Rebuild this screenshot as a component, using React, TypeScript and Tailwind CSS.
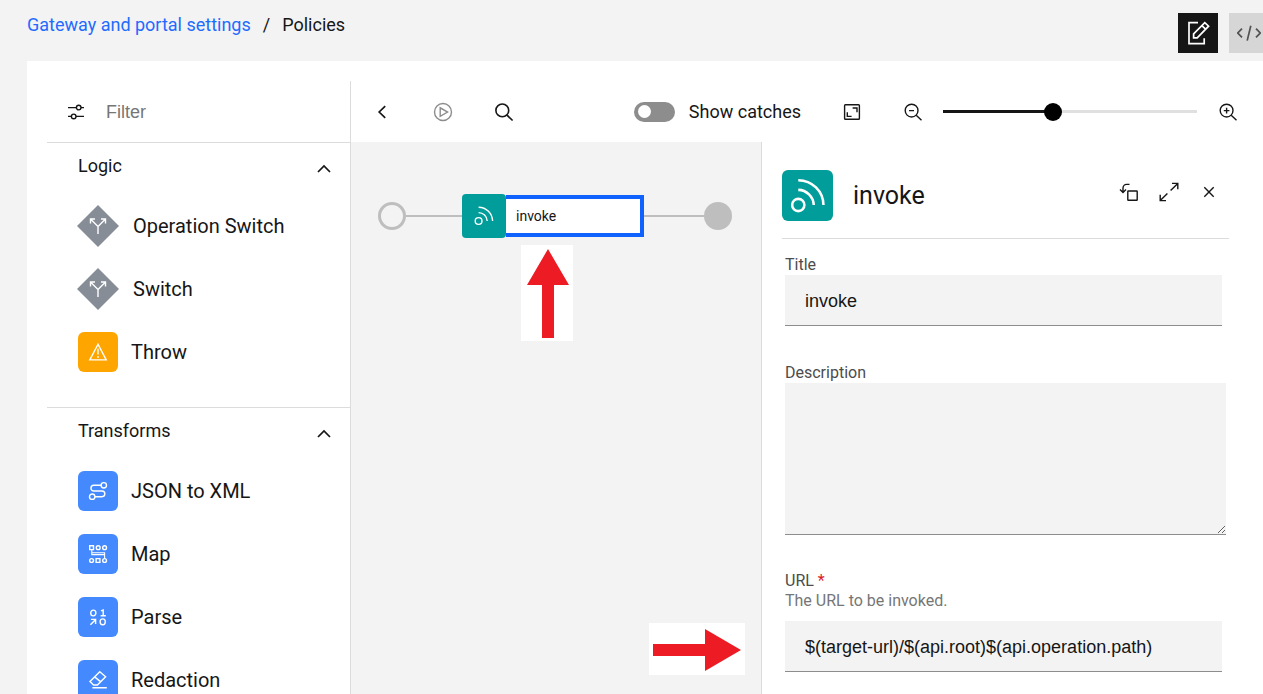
import { useState } from "react";
import type { ReactNode } from "react";

type Policy = {
  name: string;
  icon: ReactNode;
  shape?: "diamond" | "square";
  color: string;
};

const switchIcon = (
  <Icon>
    <path d="M0 8V0.5L-7 -6.5M0 0.5L7 -6.5M-7.5 -2.5V-7H-3M7.5 -2.5V-7H3" />
  </Icon>
);

const logicPolicies: Policy[] = [
  { name: "Operation Switch", icon: switchIcon, shape: "diamond", color: "text-[#878d96]" },
  { name: "Switch", icon: switchIcon, shape: "diamond", color: "text-[#878d96]" },
  {
    name: "Throw",
    color: "bg-[#ffa500]",
    icon: (
      <Icon>
        <path d="M0 -7.8L-8.2 7.9H8.2ZM0 -3.2V2.6" />
        <circle cx="0" cy="5" r="0.9" fill="currentColor" stroke="none" />
      </Icon>
    ),
  },
];

const transformPolicies: Policy[] = [
  {
    name: "JSON to XML",
    color: "bg-[#4589ff]",
    icon: (
      <Icon>
        <circle cx="5.8" cy="-5.7" r="2.7" />
        <circle cx="-5.8" cy="5.7" r="2.7" />
        <path d="M3 -5.7H-4.2A2.85 2.85 0 0 0 -4.2 0H4A2.85 2.85 0 0 1 4 5.7H-3" />
      </Icon>
    ),
  },
  {
    name: "Map",
    color: "bg-[#4589ff]",
    icon: (
      <Icon>
        <path d="M-8.3 -8.2H-4.5V-4.4H-8.3ZM-1.9 4.6H1.9V8.4H-1.9Z" />
        <circle cx="0.2" cy="-6.3" r="1.9" />
        <circle cx="6.6" cy="-6.3" r="1.9" />
        <circle cx="-6.4" cy="6.5" r="1.9" />
        <circle cx="6.6" cy="6.5" r="1.9" />
        <path d="M-6.2 -4.4V0.6H6.6V4.6M-6.2 -1.2H6.6V0.6" strokeWidth="1.1" />
      </Icon>
    ),
  },
  {
    name: "Parse",
    color: "bg-[#4589ff]",
    icon: (
      <Icon>
        <ellipse cx="-4.7" cy="-4" rx="2.6" ry="2.9" />
        <ellipse cx="4.7" cy="4.8" rx="2.6" ry="2.9" />
        <path d="M3 -6.2L5.2 -7V-1.2M2.6 -1.2H7.8M-7.6 7.8L-2.6 2.7M-7 2.4H-2.4V7" />
      </Icon>
    ),
  },
  {
    name: "Redaction",
    color: "bg-[#4589ff]",
    icon: (
      <Icon>
        <path d="M1.8 -8.2L7.6 -3.2L-0.6 5H-4.4L-8 1.6ZM-3.4 -3.1L2.8 1.9M-5.6 7.8H8.8" />
      </Icon>
    ),
  },
];

export default function App() {
  const [filter, setFilter] = useState("");
  const [title, setTitle] = useState("invoke");
  const [description, setDescription] = useState("");
  const [url, setUrl] = useState("$(target-url)/$(api.root)$(api.operation.path)");
  const [showCatches, setShowCatches] = useState(false);
  const [zoom, setZoom] = useState(43);

  return (
    <div className="flex h-screen flex-col overflow-hidden bg-[#f3f3f3] font-[Roboto,sans-serif] text-[#161616]">
      <header className="flex h-[61px] shrink-0 items-start justify-between pl-[27px]">
        <nav className="flex gap-3 pt-3 text-lg leading-[26px]">
          <a href="#settings" className="text-[#1f6bff]">
            Gateway and portal settings
          </a>
          <span>/</span>
          <span>Policies</span>
        </nav>
        <div className="-mr-[6px] flex gap-[11px] pt-[13px]">
          <button
            aria-label="Form view"
            className="flex h-10 w-10 items-center justify-center bg-[#161616] text-white"
          >
            <Icon strokeWidth={1.7}>
              <path d="M0 -10.3H-9V10.6H6.2V5.2M-4.4 4.8V0.8L6.8 -10.4L10.6 -6.8L-0.8 4.8ZM3.8 -7.4L7.6 -3.8" />
            </Icon>
          </button>
          <button
            aria-label="Source view"
            className="flex h-10 w-10 items-center justify-center bg-[#d6d6d6] text-[#525252]"
          >
            <Icon strokeWidth={1.7}>
              <path d="M-7 -4.4L-11.2 0L-7 4.4M7 -4.4L11.2 0L7 4.4M1.8 -7.3L-1.8 7.6" />
            </Icon>
          </button>
        </div>
      </header>

      <main className="ml-[27px] flex min-h-0 flex-1 bg-white pl-5 pt-5">
        <aside className="w-[304px] shrink-0 border-r border-[#dcdcdc]">
          <label className="flex h-[62px] items-center border-b border-[#dcdcdc] pl-[17px]">
            <Icon>
              <path d="M-8 -4.4H0.4M5 -4.4H8M-8 4.4H-4.6M0 4.4H8" />
              <circle cx="2.7" cy="-4.4" r="2.3" />
              <circle cx="-2.3" cy="4.4" r="2.3" />
            </Icon>
            <input
              aria-label="Filter"
              placeholder="Filter"
              value={filter}
              onChange={(e) => setFilter(e.target.value)}
              className="ml-[18px] w-full min-w-0 bg-transparent font-['Liberation_Sans',sans-serif] text-lg outline-none placeholder:text-[#767676]"
            />
          </label>
          <PolicySection title="Logic" policies={logicPolicies} filter={filter} />
          <PolicySection title="Transforms" policies={transformPolicies} filter={filter} />
        </aside>

        <div className="flex min-w-0 flex-1 flex-col">
          <div className="flex h-[61px] shrink-0 items-center pr-[5px]">
            <ToolButton label="Back">
              <path d="M3.2 -5.8L-2.8 0L3.2 5.8" strokeWidth="1.7" />
            </ToolButton>
            <ToolButton label="Run" disabled>
              <circle cx="0" cy="0" r="8.5" />
              <path d="M-2.8 -4.2V4.4L4.6 0.1Z" />
            </ToolButton>
            <ToolButton label="Search">
              <circle cx="-1.7" cy="-1.6" r="6.4" strokeWidth="1.6" />
              <path d="M3 3.1L8.6 8.5" strokeWidth="1.7" />
            </ToolButton>

            <label className="ml-auto flex items-center gap-[14px] text-lg leading-6">
              <input
                type="checkbox"
                checked={showCatches}
                onChange={(e) => setShowCatches(e.target.checked)}
                className="peer sr-only"
              />
              <span className="flex h-5 w-[41px] items-center rounded-full bg-[#8d8d8d] px-1 peer-checked:justify-end peer-checked:bg-[#198038]">
                <span className="h-[13px] w-[13px] rounded-full bg-white" />
              </span>
              Show catches
            </label>
            <div className="w-5 shrink-0" />
            <ToolButton label="Fit to screen">
              <rect x="-7.4" y="-7.2" width="14.8" height="14.4" rx="0.8" />
              <path d="M0.6 -4H5V0.3M-4.7 0.3V4.4H-0.4" />
            </ToolButton>
            <ToolButton label="Zoom out">
              <circle cx="-1.4" cy="-1.4" r="6.4" />
              <path d="M3.2 3.2L8.5 8.3M-4 -1.4H1" />
            </ToolButton>
            <input
              type="range"
              aria-label="Zoom"
              min={0}
              max={100}
              value={zoom}
              onChange={(e) => setZoom(Number(e.target.value))}
              style={{
                background: `linear-gradient(to right, #161616 ${zoom}%, #e0e0e0 ${zoom}%)`,
              }}
              className="h-[3px] w-[254px] appearance-none [&::-webkit-slider-thumb]:h-[18px] [&::-webkit-slider-thumb]:w-[18px] [&::-webkit-slider-thumb]:appearance-none [&::-webkit-slider-thumb]:rounded-full [&::-webkit-slider-thumb]:bg-black"
            />
            <ToolButton label="Zoom in">
              <circle cx="-1.4" cy="-1.4" r="6.4" />
              <path d="M3.2 3.2L8.5 8.3M-4.2 -1.4H1.4M-1.4 -4.2V1.4" />
            </ToolButton>
          </div>

          <div className="flex min-h-0 flex-1">
            <section className="relative min-w-0 flex-1 border-r border-[#dcdcdc] bg-[#f3f3f3]">
              <div className="flex items-center pl-[27px] pr-[29px] pt-[52px]">
                <span className="h-7 w-7 shrink-0 rounded-full border-3 border-[#bebebe]" />
                <span className="h-[2px] w-14 shrink-0 bg-[#bebebe]" />
                <button className="flex w-[182px] shrink-0 items-center text-left">
                  <span className="flex h-11 w-11 shrink-0 items-center justify-center rounded bg-[#009d9a] text-white">
                    <InvokeIcon className="h-5 w-5" />
                  </span>
                  <span className="flex h-[42px] flex-1 items-center border-4 border-l-0 border-[#0f62fe] bg-white pl-[10px] text-sm">
                    {title}
                  </span>
                </button>
                <span className="h-[2px] flex-1 bg-[#bebebe]" />
                <span className="h-7 w-7 shrink-0 rounded-full bg-[#bebebe]" />
              </div>

              {/* Callout arrows over the canvas */}
              <svg
                viewBox="0 0 52 96"
                className="absolute left-[170px] top-[103px] h-24 w-[52px] bg-white"
                fill="#ed1c24"
              >
                <path d="M27 4L48 40H33V93H21V40H6Z" />
              </svg>
              <svg
                viewBox="0 0 96 52"
                className="absolute left-[298px] top-[481px] h-[52px] w-24 bg-white"
                fill="#ed1c24"
              >
                <path d="M92 27L56 48V33H4V21H56V6Z" />
              </svg>
            </section>

            <section className="w-[501px] shrink-0 pl-5 pr-[34px] pt-7">
              <div className="flex items-center border-b border-[#dcdcdc] pb-[17px]">
                <span className="flex h-[51px] w-[51px] items-center justify-center rounded-md bg-[#009d9a] text-white">
                  <InvokeIcon className="h-9 w-9" />
                </span>
                <h2 className="ml-5 flex-1 text-[25px] leading-8">{title}</h2>
                <PanelButton label="Undock">
                  <rect x="-1.2" y="-1" width="9.4" height="9.2" rx="0.5" />
                  <path d="M0.5 -7.6H-2.4A3.6 3.6 0 0 0 -6 -4V0.2M-9 -2.4L-6 0.6L-3 -2.4" />
                </PanelButton>
                <PanelButton label="Expand">
                  <path d="M3 -8.6H8.8V-2.8M8.8 -8.6L1.6 -1.4M-8.8 2.8V8.6H-3M-8.8 8.6L-1.6 1.4" />
                </PanelButton>
                <PanelButton label="Close">
                  <path d="M-4.7 -4.7L4.7 4.7M4.7 -4.7L-4.7 4.7" />
                </PanelButton>
              </div>

              <div className="pl-[3px] pt-4">
                <label htmlFor="title" className="block text-base leading-5 text-[#4c4c4c]">
                  Title
                </label>
                <div className="pr-[7px]">
                  <input
                    id="title"
                    value={title}
                    onChange={(e) => setTitle(e.target.value)}
                    className="h-[51px] w-full border-b border-[#8d8d8d] bg-[#f3f3f3] px-5 pt-[2px] font-['Liberation_Sans',sans-serif] text-lg outline-none"
                  />
                </div>

                <label
                  htmlFor="description"
                  className="mt-[37px] block text-base leading-5 text-[#4c4c4c]"
                >
                  Description
                </label>
                <div className="pr-[3px]">
                  <textarea
                    id="description"
                    value={description}
                    onChange={(e) => setDescription(e.target.value)}
                    className="block h-[152px] w-full resize-y border-b border-[#8d8d8d] bg-[#f3f3f3] px-5 py-3 font-['Liberation_Sans',sans-serif] text-lg outline-none"
                  />
                </div>

                <label
                  htmlFor="url"
                  className="mt-9 block text-base leading-5 text-[#4c4c4c]"
                >
                  URL <span className="text-[#da1e28]">*</span>
                </label>
                <p className="text-base leading-5 text-[#767676]">The URL to be invoked.</p>
                <div className="pr-[7px] pt-[10px]">
                  <input
                    id="url"
                    value={url}
                    onChange={(e) => setUrl(e.target.value)}
                    className="h-[51px] w-full border-b border-[#8d8d8d] bg-[#f3f3f3] px-5 pt-[2px] font-['Liberation_Sans',sans-serif] text-lg outline-none"
                  />
                </div>
              </div>
            </section>
          </div>
        </div>
      </main>
    </div>
  );
}

function PolicySection({
  title,
  policies,
  filter,
}: {
  title: string;
  policies: Policy[];
  filter: string;
}) {
  const [open, setOpen] = useState(true);
  const visible = policies.filter((policy) =>
    policy.name.toLowerCase().includes(filter.toLowerCase())
  );

  return (
    <section className="border-b border-[#dcdcdc] pb-6">
      <button
        onClick={() => setOpen(!open)}
        aria-expanded={open}
        className="flex h-[51px] w-full items-start justify-between pl-[31px] pr-[14px] pt-[11px] text-left text-lg leading-6"
      >
        {title}
        <span className={open ? "pt-[3px]" : "rotate-180"}>
          <Icon strokeWidth={1.7}>
            <path d="M-6 3L0 -3L6 3" />
          </Icon>
        </span>
      </button>
      {open && (
        <ul>
          {visible.map((policy) => (
            <li key={policy.name} className="flex h-[63px] items-center pl-[30px] text-xl">
              <PolicyTile policy={policy} />
              {policy.name}
            </li>
          ))}
        </ul>
      )}
    </section>
  );
}

function PolicyTile({ policy }: { policy: Policy }) {
  if (policy.shape === "diamond") {
    return (
      <span className={`mr-[14px] grid h-[42px] w-[42px] place-items-center ${policy.color}`}>
        <svg viewBox="0 0 42 42" className="col-start-1 row-start-1 h-full w-full">
          <path d="M21 0L42 21L21 42L0 21Z" fill="currentColor" />
        </svg>
        <span className="col-start-1 row-start-1 text-white">{policy.icon}</span>
      </span>
    );
  }

  return (
    <span
      className={`ml-px mr-[13px] flex h-10 w-10 items-center justify-center rounded-md text-white ${policy.color}`}
    >
      {policy.icon}
    </span>
  );
}

function ToolButton({
  label,
  disabled,
  children,
}: {
  label: string;
  disabled?: boolean;
  children: ReactNode;
}) {
  return (
    <button
      aria-label={label}
      disabled={disabled}
      className="flex h-full w-[61px] shrink-0 items-center justify-center disabled:text-[#8d8d8d]"
    >
      <Icon>{children}</Icon>
    </button>
  );
}

function PanelButton({ label, children }: { label: string; children: ReactNode }) {
  return (
    <button
      aria-label={label}
      className="flex h-11 w-10 shrink-0 items-center justify-center self-start"
    >
      <Icon>{children}</Icon>
    </button>
  );
}

function Icon({ strokeWidth = 1.4, children }: { strokeWidth?: number; children: ReactNode }) {
  return (
    <svg
      viewBox="-12 -12 24 24"
      className="block h-6 w-6 shrink-0"
      fill="none"
      stroke="currentColor"
      strokeWidth={strokeWidth}
    >
      {children}
    </svg>
  );
}

function InvokeIcon({ className }: { className: string }) {
  return (
    <svg viewBox="0 0 20 20" className={className} fill="none" stroke="currentColor" strokeWidth="1.4">
      <circle cx="4.6" cy="15" r="3.4" />
      <path d="M4.6 6.6A8.8 8.8 0 0 1 13.2 15M4.6 1.2A14 14 0 0 1 18.6 15" />
    </svg>
  );
}
